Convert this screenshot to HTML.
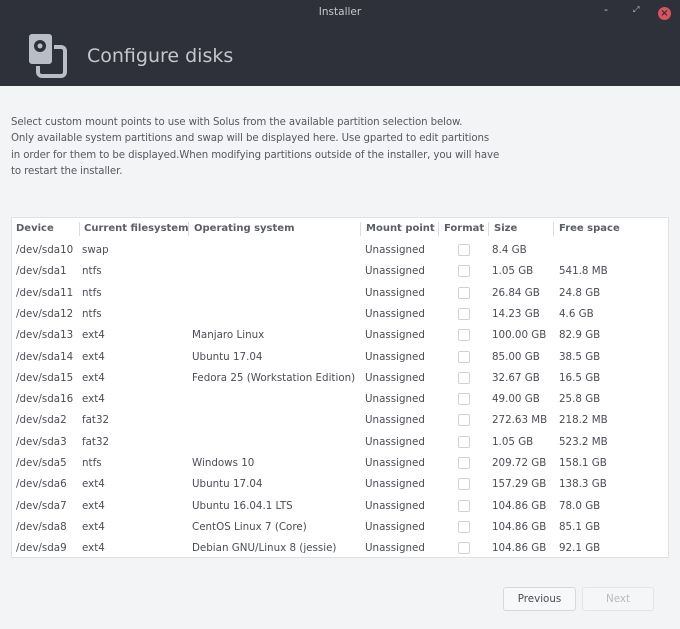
<!DOCTYPE html>
<html><head><style>
*{margin:0;padding:0;box-sizing:border-box}
body{width:680px;height:629px;background:#f3f4f6;font-family:"DejaVu Sans","Liberation Sans",sans-serif;color:#4a4d54;position:relative;overflow:hidden;font-size:10.3px}
#hdr{position:absolute;left:0;top:0;width:680px;height:86px;background:#2e313a}
.t{position:absolute;white-space:nowrap}
#tbl{position:absolute;left:11px;top:217px;width:658px;height:341px;background:#fff;border:1px solid #dfe1e5}
.h{font-weight:bold;color:#5b5e66;font-size:10px}
.sep{position:absolute;top:222px;width:1px;height:14px;background:#dadce0}
.cb{position:absolute;left:458px;width:12px;height:12px;border:1px solid #cfd2d6;border-radius:2px;background:#fff}
.btn{position:absolute;top:587px;height:24px;border:1px solid #d6d8dc;border-radius:3px;background:#f7f8f9;text-align:center;line-height:22px;font-size:10.3px}
</style></head><body>
<div id="hdr"></div>
<div class="t" style="left:0;width:680px;text-align:center;top:6px;color:#c7c9ce;font-size:10.5px">Installer</div>
<div class="t" style="left:604px;top:3px;color:#c7c9ce;font-size:11px">-</div>
<div class="t" style="left:633px;top:5px;color:#c7c9ce;font-size:8px">⤢</div>
<div style="position:absolute;left:658px;top:7px;width:13px;height:13px;border-radius:50%;background:#d9535c;color:#2e313a;font-size:10px;line-height:13px;text-align:center;font-weight:bold">×</div>
<svg style="position:absolute;left:26px;top:30px" width="44" height="50" viewBox="0 0 44 50">
<rect x="12" y="17" width="27" height="29" rx="4" fill="none" stroke="#b9bdc6" stroke-width="4"/>
<rect x="2" y="3" width="25" height="32" rx="4" fill="#b9bdc6" stroke="#2e313a" stroke-width="2"/>
<circle cx="14" cy="16" r="6" fill="#2e313a"/><circle cx="14" cy="16" r="2.5" fill="#b9bdc6"/>
</svg>
<div class="t" style="left:87px;top:45px;color:#c4c7cd;font-size:19px">Configure disks</div>
<div class="t" style="left:11px;top:115px;line-height:16.3px;font-size:10.2px;color:#555860;letter-spacing:-0.1px">Select custom mount points to use with Solus from the available partition selection below.<br>Only available system partitions and swap will be displayed here. Use gparted to edit partitions<br>in order for them to be displayed.When modifying partitions outside of the installer, you will have<br>to restart the installer.</div>
<div id="tbl"></div>
<div class="sep" style="left:79px"></div><div class="sep" style="left:188px"></div><div class="sep" style="left:360px"></div><div class="sep" style="left:438px"></div><div class="sep" style="left:488px"></div><div class="sep" style="left:553px"></div>
<div class="t h" style="left:16px;top:223px">Device</div>
<div class="t h" style="left:84px;top:223px">Current filesystem</div>
<div class="t h" style="left:194px;top:223px">Operating system</div>
<div class="t h" style="left:366px;top:223px">Mount point</div>
<div class="t h" style="left:444px;top:223px">Format</div>
<div class="t h" style="left:494px;top:223px">Size</div>
<div class="t h" style="left:559px;top:223px">Free space</div>
<div id="rows"></div>
<script>
var r=[["/dev/sda10","swap","","8.4 GB",""],["/dev/sda1","ntfs","","1.05 GB","541.8 MB"],["/dev/sda11","ntfs","","26.84 GB","24.8 GB"],["/dev/sda12","ntfs","","14.23 GB","4.6 GB"],["/dev/sda13","ext4","Manjaro Linux","100.00 GB","82.9 GB"],["/dev/sda14","ext4","Ubuntu 17.04","85.00 GB","38.5 GB"],["/dev/sda15","ext4","Fedora 25 (Workstation Edition)","32.67 GB","16.5 GB"],["/dev/sda16","ext4","","49.00 GB","25.8 GB"],["/dev/sda2","fat32","","272.63 MB","218.2 MB"],["/dev/sda3","fat32","","1.05 GB","523.2 MB"],["/dev/sda5","ntfs","Windows 10","209.72 GB","158.1 GB"],["/dev/sda6","ext4","Ubuntu 17.04","157.29 GB","138.3 GB"],["/dev/sda7","ext4","Ubuntu 16.04.1 LTS","104.86 GB","78.0 GB"],["/dev/sda8","ext4","CentOS Linux 7 (Core)","104.86 GB","85.1 GB"],["/dev/sda9","ext4","Debian GNU/Linux 8 (jessie)","104.86 GB","92.1 GB"]];
var h="";r.forEach(function(a,i){var y=244+i*21.3;
h+='<div class="t" style="left:16px;top:'+y+'px">'+a[0]+'</div><div class="t" style="left:82px;top:'+y+'px">'+a[1]+'</div><div class="t" style="left:192px;top:'+y+'px">'+a[2]+'</div><div class="t" style="left:365px;top:'+y+'px">Unassigned</div><div class="cb" style="top:'+(y)+'px"></div><div class="t" style="left:492px;top:'+y+'px">'+a[3]+'</div><div class="t" style="left:559px;top:'+y+'px">'+a[4]+'</div>';});
document.getElementById("rows").innerHTML=h;
</script>
<div class="btn" style="left:503px;width:73px;color:#4a4d54">Previous</div>
<div class="btn" style="left:582px;width:72px;color:#b8bbc0;background:#f5f6f7;border-color:#e2e4e7">Next</div>
</body></html>
